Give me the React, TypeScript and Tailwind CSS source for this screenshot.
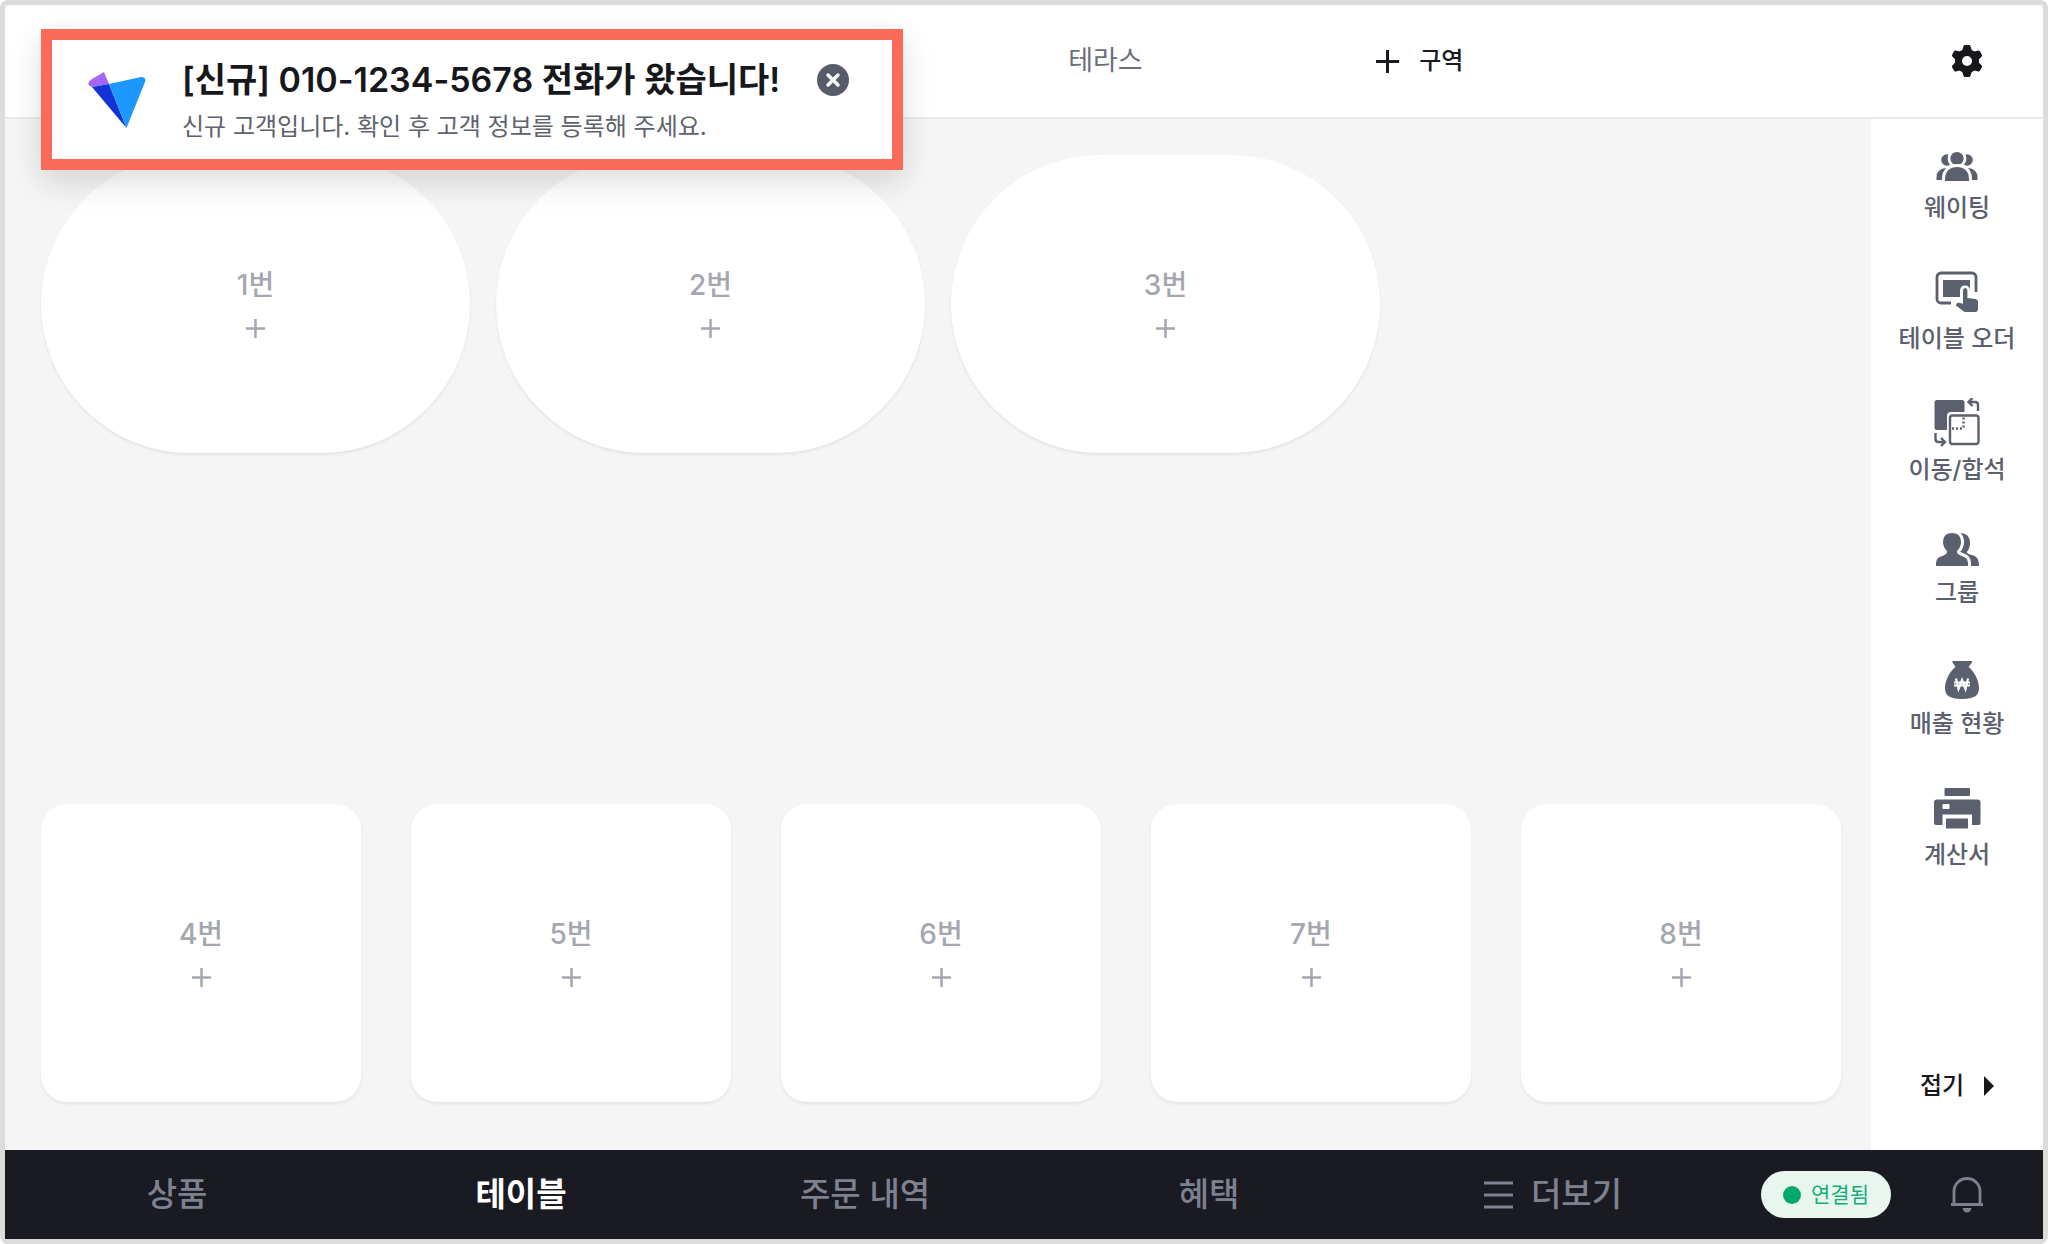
import type { ReactNode } from "react";

const INK = "#5b606e";

function Plus({ size, stroke }: { size: number; stroke: number }) {
  return (
    <svg width={size} height={size} viewBox={`0 0 ${size} ${size}`} aria-hidden="true">
      <path
        d={`M0 ${size / 2}H${size}M${size / 2} 0V${size}`}
        stroke="currentColor"
        strokeWidth={stroke}
      />
    </svg>
  );
}

function Logo() {
  return (
    <svg width="58" height="56" viewBox="0 0 58 56" aria-hidden="true">
      <path d="M1 10 Q2 8 4 7 L16 0 L21 12 L4 15 Q-1 13 1 10Z" fill="#a366f5" />
      <path d="M4 15 L21 12 L38.500 56Z" fill="#1433d6" />
      <path d="M21 12 L53 5 Q58.500 5 57 10 L38.500 56Z" fill="#1c98ff" />
    </svg>
  );
}

function CloseIcon() {
  return (
    <svg width="32" height="32" viewBox="0 0 32 32" aria-hidden="true">
      <circle cx="16" cy="16" r="16" fill="#565c68" />
      <path d="M11 11l10 10M21 11L11 21" stroke="#fff" strokeWidth="3.4" strokeLinecap="round" />
    </svg>
  );
}

function GearIcon() {
  return (
    <svg width="32" height="32" viewBox="0 0 32 32" fill="currentColor" aria-hidden="true">
      <g stroke="currentColor" strokeWidth="3" strokeLinejoin="round">
        <path d="M14 1.500h4l1.500 5h-7zM14 30.500h4l1.500-5h-7z" />
        <path d="M2.400 10.500l2-3.500 5 1.200-3.400 6zM29.600 21.500l-2 3.500-5-1.200 3.400-6z" />
        <path d="M2.400 21.500l2 3.500 5-1.200-3.400-6zM29.600 10.500l-2-3.500-5 1.200 3.400 6z" />
      </g>
      <path
        fillRule="evenodd"
        d="M16 4a12 12 0 1 0 0 24 12 12 0 0 0 0-24zm0 7a5 5 0 1 1 0 10 5 5 0 0 1 0-10z"
      />
    </svg>
  );
}

function WaitingIcon() {
  return (
    <svg width="48" height="42" viewBox="0 0 48 42" fill={INK} aria-hidden="true">
      <circle cx="14" cy="16" r="5.800" />
      <circle cx="34" cy="16" r="5.800" />
      <path d="M3.500 36v-2.500q0-9 10-9.500v12zM44.500 36v-2.500q0-9-10-9.500v12z" />
      <circle cx="24" cy="14.500" r="8" stroke="#fff" strokeWidth="2.800" />
      <path
        d="M10.500 38.500V35c0-9 6-13.500 13.500-13.500S37.500 26 37.500 35v3.500z"
        stroke="#fff"
        strokeWidth="3"
      />
    </svg>
  );
}

function TableOrderIcon() {
  return (
    <svg width="48" height="50" viewBox="0 0 48 50" fill={INK} aria-hidden="true">
      <path
        d="M18 36H8a4 4 0 0 1-4-4V10a4 4 0 0 1 4-4h31a4 4 0 0 1 4 4v15"
        fill="none"
        stroke={INK}
        strokeWidth="2.800"
      />
      <rect x="10" y="13" width="27" height="17" />
      <path
        d="M30 24q0-2.500 2-2.500t2 2.500v7.500l8 2q2.500.8 2.500 3V42q0 2-2 2h-9.500q-2 0-3.500-1.500L24 38.500q0-3 2-2.500l4 1z"
        stroke="#fff"
        strokeWidth="6"
        strokeLinejoin="round"
      />
      <path d="M30 23.500q0-2.500 2.200-2.500t2.200 2.500V31l8.100 1q2.500.5 2.500 3v7q0 3-3 3h-9q-2 0-3.500-1.500L23 38.500q0-3 3-2.800l4 1z" />
    </svg>
  );
}

function MoveIcon() {
  return (
    <svg width="48" height="50" viewBox="0 0 48 50" fill="none" stroke={INK} aria-hidden="true">
      <rect x="1.500" y="2" width="30" height="30" rx="2.500" fill={INK} stroke="none" />
      <rect x="14" y="14" width="34" height="35" rx="4" fill="#fff" stroke="none" />
      <rect x="17" y="17.500" width="28.500" height="28.500" rx="2.500" strokeWidth="2.400" />
      <path d="M19 30.500h12M30.500 19.500v12" strokeWidth="2.400" strokeDasharray="2 2" />
      <path d="M45 13V7q0-3-3-3h-5M39.500 0l-4 4 4 4" strokeWidth="2.400" />
      <path d="M2.500 35v6q0 3 3 3H12M8 40l4 4-4 4" strokeWidth="2.400" />
    </svg>
  );
}

function GroupIcon() {
  return (
    <svg width="48" height="42" viewBox="0 0 48 42" fill={INK} aria-hidden="true">
      <path d="M26 4c8 0 11 4 11 10 0 5-2 7-3 9 0 3 5 2 8.500 4.500Q46 30 46 37H26z" />
      <path
        d="M19 2.500c7 0 10.500 4.500 10.500 10.500 0 4-1.500 7-4 9.500 0 2 2 2.500 5 3.500q6 2 6 8.500v4H1.500v-4q0-6.500 6-8.500c3-1 5-1.500 5-3.500-2.500-2.500-4-5.500-4-9.500C8.500 7 12 2.500 19 2.500z"
        stroke="#fff"
        strokeWidth="3"
      />
    </svg>
  );
}

function SalesIcon() {
  return (
    <svg width="48" height="50" viewBox="0 0 48 50" fill={INK} aria-hidden="true">
      <path d="M20 9h18.500q1 0 .5 1.500L35.500 15c5 3.500 10.500 13 10.500 21 0 7-4 11-17 11s-17-4-17-11c0-8 5.500-17.500 10.500-21L19.500 10.500Q19 9 20 9z" />
      <path
        d="M23 26.500l2.500 10.500L29 28l3.500 9L35 26.500M21 30.500h16M21 33.500h16"
        fill="none"
        stroke="#fff"
        strokeWidth="2.200"
      />
    </svg>
  );
}

function PrinterIcon() {
  return (
    <svg width="48" height="50" viewBox="0 0 48 50" fill={INK} aria-hidden="true">
      <rect x="11.500" y="5" width="25.500" height="8" rx="1" />
      <path d="M4 16.500h40.500q3 0 3 3V40q0 2-2 2H39V31.500H9.500V42H3q-2 0-2-2V19.500q0-3 3-3z" />
      <rect x="9.500" y="21" width="7" height="5" rx="1" fill="#fff" />
      <rect x="13" y="35.500" width="22" height="10" />
    </svg>
  );
}

function BellIcon() {
  return (
    <svg width="32" height="36" viewBox="0 0 32 36" aria-hidden="true">
      <path
        d="M3 27V14.500a13 13 0 0 1 26 0V27M0 27.500h32"
        fill="none"
        stroke="#7d828e"
        strokeWidth="2.800"
      />
      <path d="M11.500 31h9q-1 4.500-4.500 4.500T11.500 31z" fill="#7d828e" />
    </svg>
  );
}

function MenuIcon() {
  return (
    <svg width="29" height="28" viewBox="0 0 29 28" aria-hidden="true">
      <path d="M0 2h29M0 14h29M0 26h29" stroke="currentColor" strokeWidth="3" />
    </svg>
  );
}

function TableCard({ name, shape }: { name: string; shape: string }) {
  return (
    <button
      type="button"
      className={`flex h-[298px] flex-col items-center justify-center gap-4 bg-white pb-1 text-[28px] leading-9 font-medium text-[#a4a7b0] shadow-[0_2px_3px_rgba(0,0,0,0.07)] ${shape}`}
    >
      {name}
      <Plus size={19} stroke={2.5} />
    </button>
  );
}

const sideItems: { label: string; icon: ReactNode }[] = [
  { label: "웨이팅", icon: <WaitingIcon /> },
  { label: "테이블 오더", icon: <TableOrderIcon /> },
  { label: "이동/합석", icon: <MoveIcon /> },
  { label: "그룹", icon: <GroupIcon /> },
  { label: "매출 현황", icon: <SalesIcon /> },
  { label: "계산서", icon: <PrinterIcon /> },
];

const navItems = ["상품", "테이블", "주문 내역", "혜택"];

export default function App() {
  return (
    <div className="bg-white font-['Inter','Noto_Sans_CJK_KR',sans-serif]">
      <div className="relative flex min-h-screen flex-col rounded-lg border-[5px] border-[#dcdcdc] bg-white">
        <header className="flex h-[114px] items-stretch border-b-2 border-[#e9e9e9]">
          <div className="grid flex-1 grid-cols-5">
            <button type="button" className="col-start-4 text-[27px] text-[#6a6f7b]">
              테라스
            </button>
            <button
              type="button"
              className="flex items-center justify-center gap-5 text-2xl font-medium text-[#191a1e]"
            >
              <Plus size={23} stroke={3} />
              구역
            </button>
          </div>
          <div className="flex w-[466px] items-center justify-end pr-[60px]">
            <button type="button" aria-label="설정" className="text-[#17181c]">
              <GearIcon />
            </button>
          </div>
        </header>

        <div className="flex flex-1">
          <main className="flex flex-1 flex-col justify-between gap-12 bg-[#f5f5f5] pt-9 pr-[30px] pb-12 pl-9">
            <div className="grid grid-cols-4 gap-[26px] pr-[6px]">
              {["1번", "2번", "3번"].map((n) => (
                <TableCard key={n} name={n} shape="rounded-full" />
              ))}
            </div>
            <div className="grid grid-cols-5 gap-[50px]">
              {["4번", "5번", "6번", "7번", "8번"].map((n) => (
                <TableCard key={n} name={n} shape="rounded-[26px]" />
              ))}
            </div>
          </main>

          <aside className="flex w-[172px] flex-col items-center justify-between bg-white pt-[25px] pb-12">
            <div className="flex flex-col gap-[43px]">
              {sideItems.map((item) => (
                <button
                  key={item.label}
                  type="button"
                  className="flex flex-col items-center gap-[6px] text-2xl font-medium text-[#5b606e]"
                >
                  {item.icon}
                  {item.label}
                </button>
              ))}
            </div>
            <button
              type="button"
              className="flex items-center gap-5 text-2xl font-medium text-[#17181c]"
            >
              접기
              <svg width="10" height="20" viewBox="0 0 10 20" aria-hidden="true">
                <path d="M0 0l10 10L0 20z" fill="currentColor" />
              </svg>
            </button>
          </aside>
        </div>

        <footer className="flex h-[89px] items-stretch bg-[#191a22] text-[33px] font-medium text-[#7d828e]">
          <nav className="grid flex-1 grid-cols-5">
            {navItems.map((item) => (
              <button
                key={item}
                type="button"
                className={item === "테이블" ? "font-bold text-white" : ""}
              >
                {item}
              </button>
            ))}
            <button type="button" className="flex items-center justify-center gap-[18px]">
              <MenuIcon />
              더보기
            </button>
          </nav>
          <div className="flex w-[318px] items-center justify-end gap-[60px] pr-[60px]">
            <span className="flex h-[47px] items-center gap-[10px] rounded-full bg-[#e9f6ef] px-[22px] text-[21px] font-normal text-[#12b076]">
              <span className="size-[18px] rounded-full bg-[#03a96b]" />
              연결됨
            </span>
            <button type="button" aria-label="알림">
              <BellIcon />
            </button>
          </div>
        </footer>

        <section
          role="alert"
          className="absolute top-6 left-9 flex w-[862px] items-start border-[11px] border-[#fa6c59] bg-white pt-5 pr-[43px] pb-[14px] pl-9 shadow-[0_12px_30px_rgba(0,0,0,0.14)]"
        >
          <div className="pt-3">
            <Logo />
          </div>
          <div className="ml-9 flex-1">
            <h1 className="text-[34px] leading-10 font-semibold whitespace-nowrap text-[#17181c]">
              [신규] 010-1234-5678 전화가 왔습니다!
            </h1>
            <p className="mt-[9px] text-2xl leading-9 whitespace-nowrap text-[#5d626d]">
              신규 고객입니다. 확인 후 고객 정보를 등록해 주세요.
            </p>
          </div>
          <button type="button" aria-label="닫기" className="pt-1">
            <CloseIcon />
          </button>
        </section>
      </div>
    </div>
  );
}
